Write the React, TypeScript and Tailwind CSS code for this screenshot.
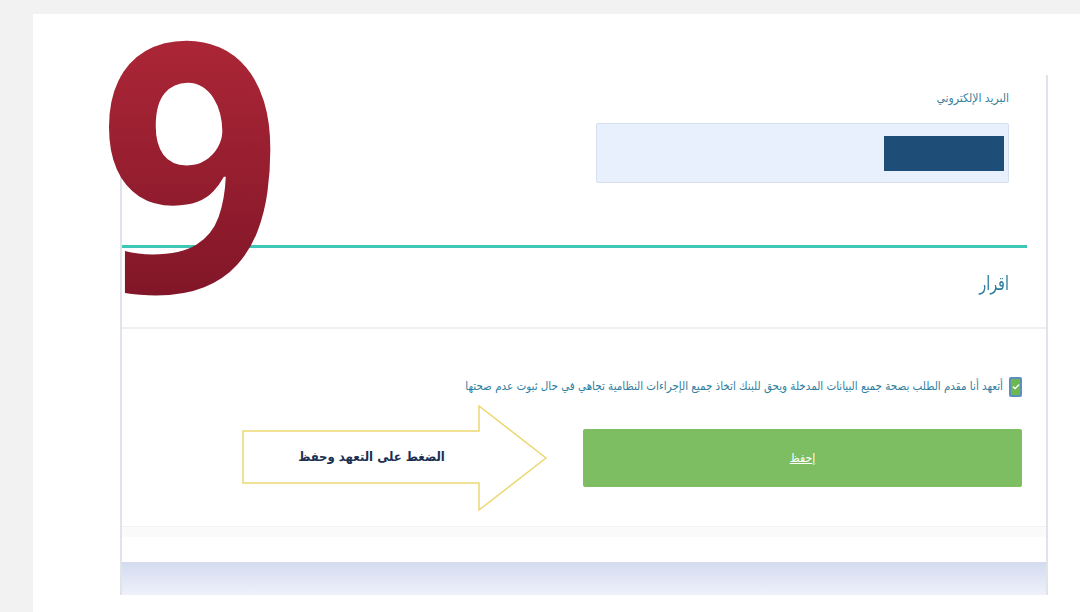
import { Check } from 'lucide-react';

const arabicNarrow = { fontFamily: '"DejaVu Sans Condensed", "DejaVu Sans", sans-serif' };

function HintArrow() {
  return (
    <div className="absolute left-[209px] top-[391px] w-[306px] h-[106px]">
      <svg width="306" height="106" viewBox="0 0 306 106" className="absolute inset-0">
        <path
          d="M1 26 H237 V1 L304 53 L237 105 V78 H1 Z"
          fill="#ffffff"
          stroke="#ecd873"
          strokeWidth="1.5"
        />
      </svg>
      <div
        className="absolute left-0 top-[26px] w-[237px] h-[52px] pl-[22px] flex items-center justify-center text-[13px] font-bold text-[#1d2f4f]"
        style={arabicNarrow}
        dir="rtl"
      >
        الضغط على التعهد وحفظ
      </div>
    </div>
  );
}

export default function App() {
  return (
    <div className="w-[1080px] h-[612px] bg-[#f2f2f2] pt-[14px] pl-[33px] overflow-hidden">
      <div className="relative bg-white h-full pl-[87px] pr-[32px] pt-[61px]">
        {/* Card */}
        <div className="w-[928px] border-l-2 border-r-2 border-[#e1e3ea]" dir="rtl">
          {/* Email field */}
          <div className="pr-[37px] pt-[14px] h-[170px]" style={arabicNarrow}>
            <div className="text-[12px] text-[#3b7f9c] leading-[18px]">البريد الإلكتروني</div>
            <div className="mt-[16px] w-[413px] h-[60px] bg-[#e8f0fe] border border-[#d6dfee] rounded-[2px] pr-[4px] flex items-center">
              <div className="w-[120px] h-[35px] bg-[#1e4d78]" />
            </div>
          </div>

          <div className="mr-[19px] h-[3px] bg-[#3fc7b6]" />

          {/* Heading */}
          <div className="h-[81px] border-b-2 border-[#eeeff2] pr-[37px] pt-[22px]">
            <div className="text-[16px] text-[#2d7da0] leading-[28px] origin-right scale-y-[1.2]" style={arabicNarrow}>
              اقرار
            </div>
          </div>

          {/* Declaration */}
          <div className="relative pt-[46px] pr-[24px] h-[208px]">
            <label className="flex items-center gap-[6px] h-[24px]" style={arabicNarrow}>
              <span className="w-[13px] h-[20px] bg-[#6cb84f] border-2 border-[#5a8fc0] rounded-[2px] flex items-center justify-center">
                <Check className="w-[8px] h-[8px] text-white" strokeWidth={4} />
              </span>
              <span className="text-[11.5px] text-[#2f7ea0] tracking-[-0.3px] whitespace-nowrap">
                أتعهد أنا مقدم الطلب بصحة جميع البيانات المدخلة ويحق للبنك اتخاذ جميع الإجراءات النظامية تجاهي في حال ثبوت عدم صحتها
              </span>
            </label>

            <button
              className="mt-[30px] w-[439px] h-[58px] bg-[#7dbe62] rounded-[2px] text-white text-[12px] underline flex items-center justify-center"
              style={arabicNarrow}
            >
              إحفظ
            </button>

            <div className="absolute bottom-0 left-0 right-0 h-[11px] bg-[#fafafb] border-t border-[#f1f2f5]" />
          </div>

          <div className="h-[25px]" />
          <div className="h-[33px] bg-gradient-to-b from-[#d4dbef] to-[#eef1fa]" />
        </div>

        <HintArrow />

        {/* Step number */}
        <div
          className="absolute left-[62px] top-[-31px] px-[4px] text-[348px] font-bold leading-none scale-x-[0.92] origin-left bg-gradient-to-b from-[#b52a3a] to-[#7c1426] bg-clip-text text-transparent select-none"
          style={{ fontFamily: '"Open Sans", sans-serif' }}
        >
          9
        </div>
      </div>
    </div>
  );
}
